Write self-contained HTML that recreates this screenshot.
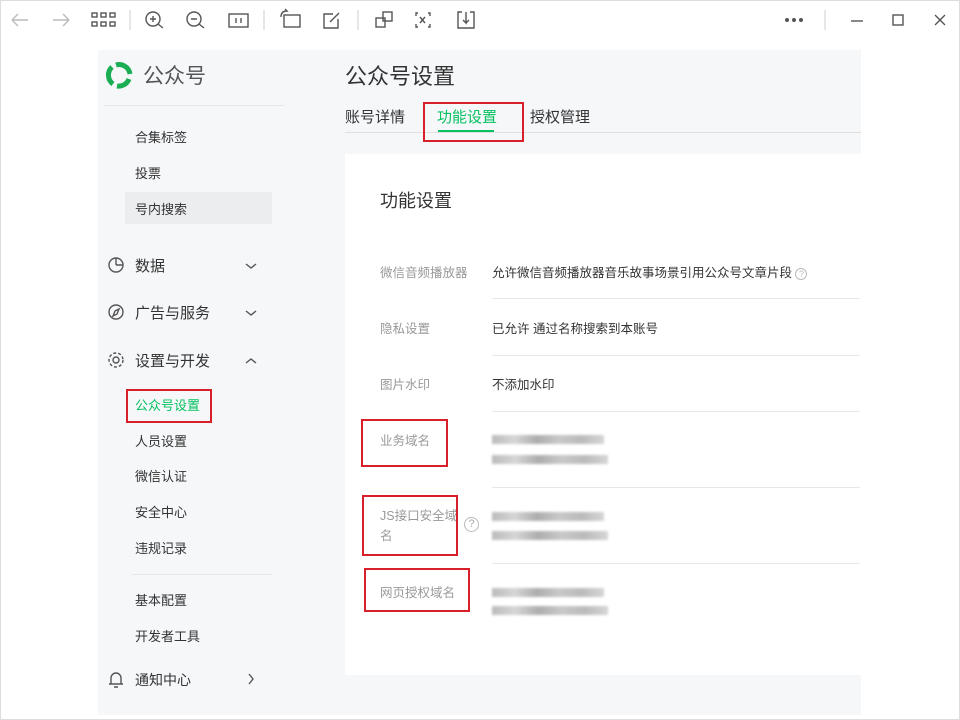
<!DOCTYPE html><html><head><meta charset="utf-8"><style>
*{margin:0;padding:0;box-sizing:border-box}
body{width:960px;height:720px;background:#fff;font-family:"Liberation Sans","Noto Sans CJK SC",sans-serif;position:relative;overflow:hidden}
.a{position:absolute;white-space:nowrap}
.ic{position:absolute;stroke:#555;fill:none;stroke-width:1.4}
.s{font-size:13px;color:#333}
.m{font-size:15px;color:#333}
.l{font-size:12.5px;color:#999}
.v{font-size:12.5px;color:#333}
.red{position:absolute;border:2px solid #d9202a}
.line{position:absolute;height:1px;background:#e7e7e7}
.blur{position:absolute;height:9px;background:linear-gradient(90deg,#aaa,#ccc 20%,#999 40%,#bbb 60%,#aaa 80%,#ccc);filter:blur(1.2px);opacity:.8}
</style></head><body>
<div class="a" style="left:0;top:0;width:960px;height:720px;border:1px solid #ddd;z-index:5;pointer-events:none"></div>
<svg class="ic" style="left:0;top:0" width="960" height="44" viewBox="0 0 960 44">
<g stroke="#bbb"><path d="M12 20h16M12 20l6-6M12 20l6 6M53 20h16M69 20l-6-6M69 20l-6 6"/></g>
<g stroke="#555"><rect x="92" y="13" width="5" height="4"/><rect x="101" y="13" width="5" height="4"/><rect x="110" y="13" width="5" height="4"/><rect x="92" y="22" width="5" height="4"/><rect x="101" y="22" width="5" height="4"/><rect x="110" y="22" width="5" height="4"/>
<path d="M130 10v20M264 10v20M358 10v20" stroke="#ddd"/>
<circle cx="153" cy="19" r="7"/><path d="M158 24l5 4M150 19h6M153 16v6"/>
<circle cx="194" cy="19" r="7"/><path d="M199 24l5 4M191 19h6"/>
<rect x="229" y="14" width="19" height="13"/><path d="M236 18v5M241 18v5"/>
<rect x="284" y="15" width="16" height="12"/><path d="M281 17q0-6 6-6l-2-2"/>
<path d="M333 14h-9v14h14v-9M330 22l9-9"/>
<rect x="376" y="18" width="9" height="9"/><rect x="383" y="12" width="9" height="9"/>
<path d="M418 13h-2v3M428 13h2v3M418 27h-2v-3M428 27h2v-3M420 17l5 6M425 17l-5 6"/>
<path d="M462 12h-4v16h16v-16h-4M466 12v11l-3-3M466 23l3-3"/>
<circle cx="787" cy="20" r="1.3" fill="#555"/><circle cx="794" cy="20" r="1.3" fill="#555"/><circle cx="801" cy="20" r="1.3" fill="#555"/>
<path d="M825 10v20" stroke="#ddd"/>
<path d="M851 21h12"/><rect x="893" y="15" width="10" height="10"/><path d="M935 15l10 10M945 15l-10 10"/></g>
</svg>
<div class="a" style="left:98px;top:50px;width:763px;height:665px;background:#f6f7f9"></div>
<div class="line" style="left:104px;top:105px;width:180px"></div>
<svg class="a" style="left:104px;top:60px" width="30" height="30" viewBox="0 0 30 30"><g fill="none" stroke="#1aad53" stroke-width="5"><path d="M9 24A11 11 0 0 1 8 7"/><path d="M12 5a11 11 0 0 1 14 9"/><path d="M25 19a11 11 0 0 1-12 7"/></g></svg>
<div class="a" style="left:143px;top:60px;font-size:21px;color:#555">公众号</div>
<div class="a s" style="left:135px;top:127px">合集标签</div>
<div class="a s" style="left:135px;top:163px">投票</div>
<div class="a" style="left:125px;top:192px;width:147px;height:32px;background:#ecedef"></div>
<div class="a s" style="left:135px;top:199px">号内搜索</div>
<svg class="ic" style="left:107px;top:255px" width="20" height="440" viewBox="0 0 20 440"><circle cx="9" cy="10" r="7"/><path d="M9 10V3M9 10h7"/><circle cx="9" cy="57" r="7"/><path d="M12 54l-2 5-4 2 2-5z"/><circle cx="9" cy="105" r="3"/><circle cx="9" cy="105" r="7" stroke-dasharray="3 2"/><path d="M4 429v-6a5 5 0 0 1 10 0v6h2H2M7 432h4"/></svg>
<div class="a m" style="left:135px;top:255px">数据</div>
<div class="a m" style="left:135px;top:302px">广告与服务</div>
<div class="a m" style="left:135px;top:350px">设置与开发</div>
<svg class="ic" style="left:244px;top:258px" width="14" height="430" viewBox="0 0 14 430" stroke="#ccc" stroke-width="1.1"><path d="M2 6l5 4 5-4M2 53l5 4 5-4M2 105l5-4 5 4M5 416l4 5-4 5"/></svg>
<div class="a s" style="left:135px;top:395px;color:#07c160">公众号设置</div>
<div class="red" style="left:126px;top:389px;width:86px;height:34px"></div>
<div class="a s" style="left:135px;top:431px">人员设置</div>
<div class="a s" style="left:135px;top:466px">微信认证</div>
<div class="a s" style="left:135px;top:502px">安全中心</div>
<div class="a s" style="left:135px;top:538px">违规记录</div>
<div class="line" style="left:132px;top:574px;width:140px"></div>
<div class="a s" style="left:135px;top:590px">基本配置</div>
<div class="a s" style="left:135px;top:626px">开发者工具</div>
<div class="a m" style="left:135px;top:670px;font-size:14px">通知中心</div>
<div class="a" style="left:345px;top:59px;font-size:22px;color:#333">公众号设置</div>
<div class="a" style="left:345px;top:106px;font-size:15px;color:#333">账号详情</div>
<div class="a" style="left:437px;top:106px;font-size:15px;color:#07c160">功能设置</div>
<div class="a" style="left:438px;top:130px;width:56px;height:2px;background:#07c160"></div>
<div class="a" style="left:530px;top:106px;font-size:15px;color:#333">授权管理</div>
<div class="a" style="left:345px;top:132px;width:516px;height:1px;background:#e0e0e0"></div>
<div class="red" style="left:423px;top:102px;width:101px;height:40px"></div>
<div class="a" style="left:345px;top:154px;width:516px;height:521px;background:#fff"></div>
<div class="a" style="left:380px;top:187px;font-size:18px;color:#333">功能设置</div>
<div class="a l" style="left:380px;top:262px">微信音频播放器</div>
<div class="a v" style="left:492px;top:262px">允许微信音频播放器音乐故事场景引用公众号文章片段 <span style="color:#bbb;border:1px solid #bbb;border-radius:50%;font-size:9px;display:inline-block;width:12px;height:12px;line-height:11px;text-align:center">?</span></div>
<div class="line" style="left:492px;top:298px;width:368px"></div>
<div class="a l" style="left:380px;top:318px">隐私设置</div>
<div class="a v" style="left:492px;top:318px">已允许 通过名称搜索到本账号</div>
<div class="line" style="left:492px;top:355px;width:368px"></div>
<div class="a l" style="left:380px;top:374px">图片水印</div>
<div class="a v" style="left:492px;top:374px">不添加水印</div>
<div class="line" style="left:492px;top:411px;width:368px"></div>
<div class="a l" style="left:380px;top:430px">业务域名</div>
<div class="blur" style="left:492px;top:435px;width:112px"></div><div class="blur" style="left:492px;top:455px;width:116px"></div>
<div class="red" style="left:361px;top:419px;width:87px;height:48px"></div>
<div class="line" style="left:492px;top:487px;width:368px"></div>
<div class="a l" style="left:380px;top:506px;line-height:20px">JS接口安全域<br>名</div>
<div class="a" style="left:464px;top:517px;width:15px;height:15px;border:1px solid #bbb;border-radius:50%;font-size:11px;color:#aaa;text-align:center;line-height:13px">?</div>
<div class="blur" style="left:492px;top:512px;width:112px"></div><div class="blur" style="left:492px;top:531px;width:116px"></div>
<div class="red" style="left:362px;top:495px;width:96px;height:61px"></div>
<div class="line" style="left:492px;top:563px;width:368px"></div>
<div class="a l" style="left:380px;top:582px">网页授权域名</div>
<div class="blur" style="left:492px;top:588px;width:112px"></div><div class="blur" style="left:492px;top:606px;width:116px"></div>
<div class="red" style="left:364px;top:568px;width:106px;height:44px"></div>
</body></html>
